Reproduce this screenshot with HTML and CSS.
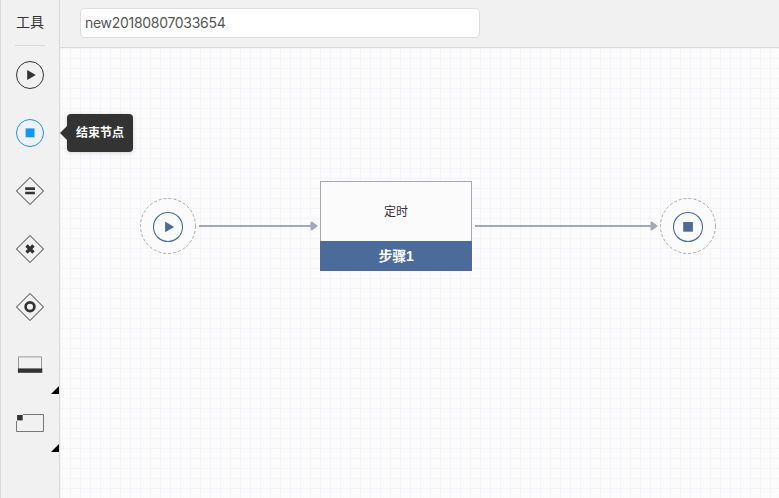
FILE: index.html
```html
<!DOCTYPE html>
<html lang="zh-CN">
<head>
<meta charset="utf-8">
<title>流程设计</title>
<link rel="stylesheet" href="styles.css">
</head>
<body>
<div class="app">
  <aside class="sidebar">
    <h1 class="sidebar-title">工具</h1>
    <div class="divider"></div>
    <div class="tool"><svg width="30" height="30" viewBox="0 0 30 30"><circle cx="15" cy="15" r="13.5"/><path class="solid" d="M12.2 9.9v10.2l8.6-5.1z"/></svg></div>
    <div class="tool active"><svg width="30" height="30" viewBox="0 0 30 30"><circle cx="15" cy="15" r="13.5"/><path class="solid" d="M10.6 10.4h8.9v8.9h-8.9z"/></svg>
      <div class="tooltip">结束节点</div>
    </div>
    <div class="tool"><svg width="30" height="30" viewBox="0 0 30 30"><path d="M15 1.5 28.5 15 15 28.5 1.5 15z"/><path class="solid" d="M10.2 11.3h9.7v2.6h-9.7zM10.2 15.7h9.7v2.6h-9.7z"/></svg></div>
    <div class="tool"><svg width="30" height="30" viewBox="0 0 30 30"><path d="M15 1.5 28.5 15 15 28.5 1.5 15z"/><path class="thick" d="m11.5 11.5 7 7m0-7-7 7"/></svg></div>
    <div class="tool"><svg width="30" height="30" viewBox="0 0 30 30"><path d="M15 1.5 28.5 15 15 28.5 1.5 15z"/><circle class="ring" cx="15" cy="14.8" r="4.4"/></svg></div>
    <div class="tool expandable"><svg width="30" height="30" viewBox="0 0 30 30"><path class="light" d="M3.5 19V6.9h23V19"/><path class="solid" d="M2.9 18.4h24.4v4.4H2.9z"/></svg></div>
    <div class="tool expandable"><svg width="30" height="30" viewBox="0 0 30 30"><path class="frame" d="M8 6.5h20.5v17h-27V13"/><path class="solid" d="M2.1 7h5.6v5.4H2.1z"/></svg></div>
  </aside>
  <main class="main">
    <header class="topbar"><input class="name" type="text" value="new20180807033654" aria-label="名称"></header>
    <section class="canvas">
      <svg class="links" width="719" height="450" viewBox="0 0 719 450">
        <path class="line" d="M139 178h113M415 178h177"/>
        <path class="arrow" d="M250.5 173.8h1.8l5.7 4.2-5.7 4.2h-1.8zM590.5 173.8h1.8l5.7 4.2-5.7 4.2h-1.8z"/>
      </svg>
      <svg class="node start" width="56" height="56" viewBox="0 0 56 56"><circle class="halo" cx="28" cy="28" r="27.5"/><circle class="core" cx="28" cy="29" r="14.5"/><path class="mark" d="M25.1 23.5v10.8l9-5.4z"/></svg>
      <div class="step"><div class="step-body">定时</div><div class="step-name">步骤1</div></div>
      <svg class="node end" width="56" height="56" viewBox="0 0 56 56"><circle class="halo" cx="28" cy="28" r="27.5"/><circle class="core" cx="28" cy="29" r="14.5"/><path class="mark" d="M23.2 24h9.7v9.7h-9.7z"/></svg>
    </section>
  </main>
</div>
</body>
</html>
```
FILE: styles.css
```css
* { box-sizing: border-box; }
body {
  margin: 0;
  font-family: "Liberation Sans", "Noto Sans CJK SC", sans-serif;
  color: #333;
  overflow: hidden;
}
.app { display: flex; height: 498px; }
.sidebar {
  width: 60px;
  flex: none;
  background: #f1f1f1;
  border-left: 1px solid #dadbdd;
  border-right: 1px solid #d8d9db;
}
.sidebar-title {
  margin: 0;
  height: 45px;
  line-height: 44px;
  font-size: 14px;
  font-weight: 400;
  text-align: center;
}
.divider { height: 1px; width: 30px; margin: 0 auto; background: #dadada; }
.tool {
  position: relative;
  height: 58px;
  display: flex;
  justify-content: center;
  align-items: center;
  color: #333;
}
.tool svg { fill: none; stroke: currentColor; stroke-width: 1; }
.tool .solid { fill: currentColor; stroke: none; }
.tool .thick { stroke-width: 3.3; }
.tool .ring { stroke-width: 2.7; }
.tool .light { stroke: #999; }
.tool .frame { stroke: #777; }
.tool.active { color: #1296f3; }
.expandable::after {
  content: "";
  position: absolute;
  right: 0;
  bottom: 0;
  border-left: 8px solid transparent;
  border-bottom: 8px solid #000;
}
.tooltip {
  position: absolute;
  left: 66px;
  top: 10px;
  z-index: 2;
  width: 66px;
  height: 38px;
  border-radius: 4px;
  background: #333;
  color: #fff;
  font-size: 12px;
  font-weight: 700;
  line-height: 39px;
  text-align: center;
  box-shadow: 0 1px 4px rgba(0, 0, 0, .15);
}
.tooltip::before {
  content: "";
  position: absolute;
  left: -7px;
  top: 12px;
  border: 7px solid transparent;
  border-left: 0;
  border-right-color: #333;
}
.main { flex: 1; display: flex; flex-direction: column; min-width: 0; }
.topbar {
  height: 48px;
  padding: 8px 20px;
  background: #f1f1f1;
  border-bottom: 1px solid #dadbdd;
}
.name {
  display: block;
  width: 400px;
  height: 30px;
  padding: 0 4px 2px;
  border: 1px solid #ddd;
  border-radius: 4px;
  background: #fff;
  color: #555;
  font: 14px Inter, "Liberation Sans", sans-serif;
  letter-spacing: -.3px;
}
.canvas {
  position: relative;
  flex: 1;
  background-color: #fbfbfb;
  background-image: linear-gradient(#f3f3f8 1px, transparent 1px), linear-gradient(90deg, #f3f3f8 1px, transparent 1px);
  background-size: 10px 10px;
}
.links { position: absolute; left: 0; top: 0; }
.line { stroke: #a5a8b3; stroke-width: 2; }
.arrow { fill: #a5a8b3; }
.node { position: absolute; top: 150px; }
.start { left: 80px; }
.end { left: 600px; }
.halo { fill: #fbfbfb; stroke: #a9a9b0; stroke-dasharray: 3 2; }
.core { fill: none; stroke: #4b6b9a; stroke-width: 1.1; }
.mark { fill: #4b6b9a; }
.step { position: absolute; left: 260px; top: 133px; width: 152px; text-align: center; }
.step-body {
  height: 60px;
  line-height: 61px;
  border: 1px solid #a5a8b0;
  border-bottom: 0;
  background: #fbfbfb;
  font-size: 12px;
}
.step-name {
  height: 30px;
  line-height: 30px;
  background: #4b6b9a;
  color: #fff;
  font-size: 14px;
  font-weight: 700;
  letter-spacing: -.3px;
}
```
